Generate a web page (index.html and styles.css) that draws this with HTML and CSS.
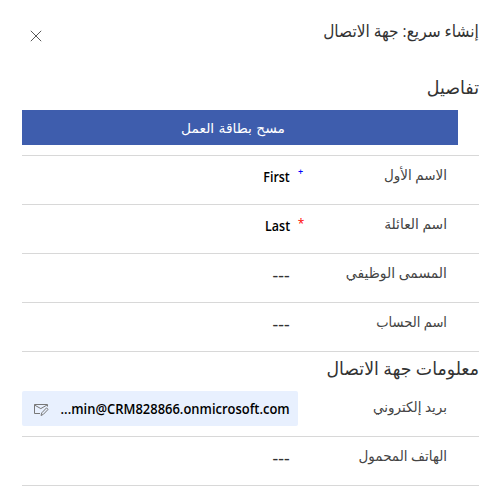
FILE: index.html
```html
<!DOCTYPE html>
<html lang="ar" dir="rtl">
<head>
<meta charset="utf-8">
<title>إنشاء سريع: جهة الاتصال</title>
<link rel="stylesheet" href="styles.css">
</head>
<body>
<header class="header">
  <h1 class="title">إنشاء سريع: جهة الاتصال</h1>
  <button class="close" aria-label="إغلاق"><svg width="12" height="12" viewBox="0 0 12 12"><path d="M.8.8l10.4 10.4M11.2.8L.8 11.2"/></svg></button>
</header>
<main class="form">
  <h2 class="heading details">تفاصيل</h2>
  <button class="scan">مسح بطاقة العمل</button>
  <section class="fields">
    <div class="row"><label class="label">الاسم الأول</label><span class="mark plus">+</span><bdi class="value" dir="ltr">First</bdi></div>
    <div class="row"><label class="label family">اسم العائلة</label><span class="mark star">*</span><bdi class="value" dir="ltr">Last</bdi></div>
    <div class="row"><label class="label job">المسمى الوظيفي</label><span class="mark"></span><bdi class="value empty" dir="ltr">---</bdi></div>
    <div class="row"><label class="label account">اسم الحساب</label><span class="mark"></span><bdi class="value empty" dir="ltr">---</bdi></div>
  </section>
  <h2 class="heading contact">معلومات جهة الاتصال</h2>
  <div class="row"><label class="label">بريد إلكتروني</label><span class="mark"></span><div class="email"><bdi class="value" dir="ltr">...min@CRM828866.onmicrosoft.com</bdi><svg class="mail" width="16" height="14" viewBox="0 0 16 14"><path d="M7 10.5H1.5v-9h13v2M1.5 2l6.3 3.6L14 2M8 12.5l.8-2.7 4.7-4.9 1.6 1.5-4.7 4.9z"/></svg></div></div>
  <div class="row"><label class="label">الهاتف المحمول</label><span class="mark"></span><bdi class="value empty" dir="ltr">---</bdi></div>
</main>
</body>
</html>
```
FILE: styles.css
```css
* { box-sizing: border-box; }
body { margin: 0; background: #fff; color: #333; font: 14px "Open Sans", "DejaVu Sans", sans-serif; overflow: hidden; }
.header { height: 72px; padding: 18px 17px 0 28px; display: flex; justify-content: space-between; align-items: flex-start; }
h1, h2 { margin: 0; font-weight: 400; white-space: nowrap; transform-origin: right; }
.title { font-size: 17px; line-height: 25px; transform: scaleX(.906); }
.close { width: 16px; height: 16px; margin-top: 10px; padding: 2px; border: 0; background: none; }
.close svg { display: block; fill: none; stroke: #444; stroke-width: .9; }
.form { padding: 0 17px 0 22px; }
.heading { font-size: 18px; line-height: 32px; }
.details { height: 38px; line-height: 30px; transform: scaleX(.97); }
.scan { display: block; width: 436px; height: 35px; margin-right: 21px; padding: 0 14px 0 0; border: 0; background: #3e5dad; color: #fff; font: 13.8px "DejaVu Sans", sans-serif; }
.fields { margin-top: 10px; border-top: 1px solid #d8d8d8; }
.row { display: flex; height: 49px; border-bottom: 1px solid #d8d8d8; padding-right: 32px; }
.label { flex: none; width: 134px; padding-top: 8px; line-height: 22px; color: #444; white-space: nowrap; transform: scaleX(.965); transform-origin: right; }
.family { transform: scaleX(.985); }
.job { transform: scaleX(.995); }
.account { transform: scaleX(.935); }
.mark { flex: none; width: 23px; padding-top: 10px; text-align: center; line-height: 18px; }
.plus { padding-top: 7px; padding-right: 2px; color: #00f; font-size: 9px; font-weight: 600; }
.star { padding-top: 10px; padding-right: 1px; color: #f00; font-size: 12px; }
.value { flex: none; padding-top: 10px; line-height: 22px; color: #000; font-size: 14px; font-weight: 550; white-space: nowrap; transform: scaleX(.89); transform-origin: right; }
.empty { color: #333; transform: scaleX(1.25); }
.contact { height: 36px; transform: scaleX(.962); }
.email { flex: none; width: 276px; height: 35px; margin-top: 3px; margin-right: -8px; padding: 0 8px 0 11px; display: flex; background: #e8f0fe; border-radius: 2px; position: relative; }
.email .value { padding-top: 7px; transform: scaleX(.925); }
.mail { position: absolute; left: 11px; top: 12px; fill: none; stroke: #777; }
```
